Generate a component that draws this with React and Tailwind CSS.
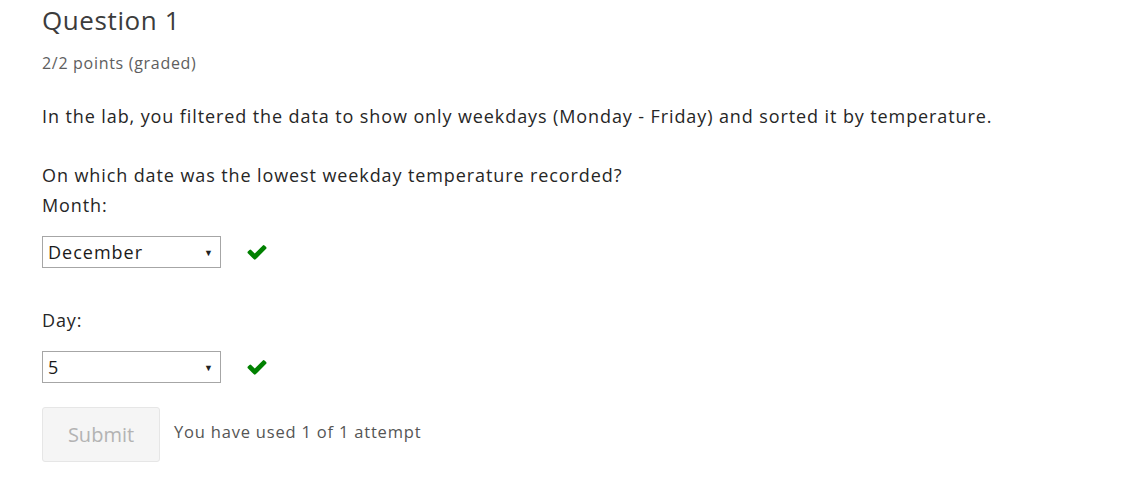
import React from "react";

function Check() {
  return (
    <svg viewBox="0 0 1792 1792" className="w-[22px] h-[22px] fill-[#008100]">
      <path d="M1671 566q0 40-28 68l-724 724-136 136q-28 28-68 28t-68-28l-136-136-362-362q-28-28-28-68t28-68l136-136q28-28 68-28t68 28l294 295 656-657q28-28 68-28t68 28l136 136q28 28 28 68z" />
    </svg>
  );
}

function Dropdown({ value }) {
  return (
    <div className="flex items-center gap-[25px]">
      <div className="relative w-[179px] h-[32px] border border-[#a6a6a6] bg-white flex items-center px-[5px]">
        <span className="text-[18px] tracking-[1px] text-[#1a1a1a]">{value}</span>
        <span className="absolute right-[7px] top-[9px] text-[9px] text-[#222]">▼</span>
      </div>
      <Check />
    </div>
  );
}

export default function App() {
  return (
    <div className="bg-white min-h-[480px] pl-[42px] pt-[2px] font-['Open_Sans',sans-serif] text-[#262626]">
      <h3 className="text-[26px] leading-[36px] tracking-[0.6px] text-[#3c3c3c]">Question 1</h3>
      <div className="mt-[14px] text-[16px] leading-[22px] tracking-[0.7px] text-[#5e5e5e]">2/2 points (graded)</div>

      <div className="text-[18px] leading-[30px] tracking-[0.9px]">
        <p className="mt-[27px]">
          In the lab, you filtered the data to show only weekdays (Monday - Friday) and sorted it by temperature.
        </p>

        <p className="mt-[29px]">On which date was the lowest weekday temperature recorded?</p>
        <p>Month:</p>
      </div>
      <div className="mt-[16px]">
        <Dropdown value="December" />
      </div>

      <p className="mt-[37px] text-[18px] leading-[30px] tracking-[0.9px]">Day:</p>
      <div className="mt-[16px]">
        <Dropdown value="5" />
      </div>

      <div className="mt-[24px] flex items-center gap-[14px]">
        <button className="w-[118px] h-[55px] rounded-[3px] border border-[#e6e6e6] bg-[#f5f5f5] text-[20px] text-[#b3b3b3]">
          Submit
        </button>
        <span className="pb-[5px] text-[16.5px] tracking-[0.8px] text-[#555]">You have used 1 of 1 attempt</span>
      </div>
    </div>
  );
}
